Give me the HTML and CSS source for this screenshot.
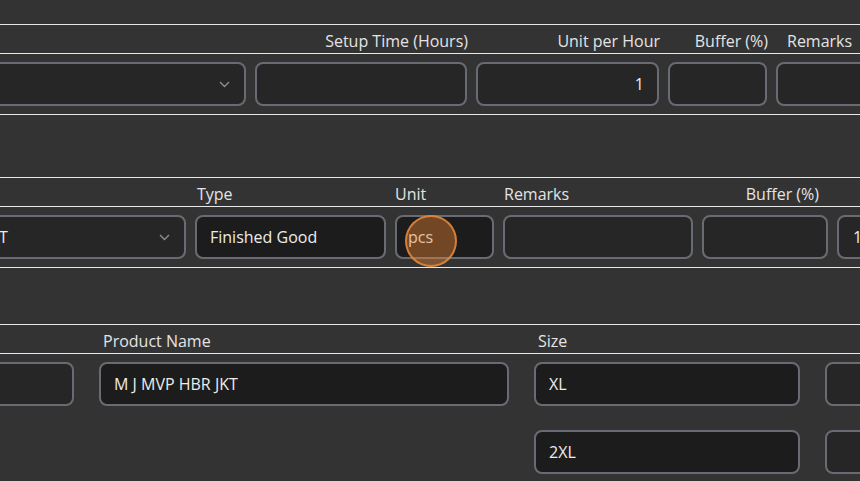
FILE: index.html
```html
<!DOCTYPE html>
<html lang="en">
<head>
<meta charset="utf-8">
<title>Routing form</title>
<link rel="stylesheet" href="styles.css">
</head>
<body>
<section class="block s1">
  <div class="head">
    <div class="grid">
      <div class="lbl"></div>
      <div class="lbl right">Setup Time (Hours)</div>
      <div class="lbl right">Unit per Hour</div>
      <div class="lbl right">Buffer (%)</div>
      <div class="lbl remarks1">Remarks</div>
    </div>
  </div>
  <div class="body">
    <div class="grid">
      <div class="field select"><span class="val"></span><svg class="chev" width="11" height="7" viewBox="0 0 11 7"><polyline points="1,1 5.5,5.5 10,1" fill="none" stroke="#8e8e8e" stroke-width="1.4"/></svg></div>
      <div class="field"></div>
      <div class="field num">1</div>
      <div class="field"></div>
      <div class="field"></div>
    </div>
  </div>
</section>

<section class="block s2">
  <div class="head">
    <div class="grid">
      <div class="lbl"></div>
      <div class="lbl pad2">Type</div>
      <div class="lbl">Unit</div>
      <div class="lbl pad1">Remarks</div>
      <div class="lbl right pr9">Buffer (%)</div>
      <div class="lbl"></div>
    </div>
  </div>
  <div class="body">
    <div class="grid">
      <div class="field select"><span class="val">M J MVP HBR JKT</span><svg class="chev" width="11" height="7" viewBox="0 0 11 7"><polyline points="1,1 5.5,5.5 10,1" fill="none" stroke="#8e8e8e" stroke-width="1.4"/></svg></div>
      <div class="field ro">Finished Good</div>
      <div class="field ro unit">pcs<span class="click"></span></div>
      <div class="field"></div>
      <div class="field"></div>
      <div class="field last">1</div>
    </div>
  </div>
</section>

<section class="block s3">
  <div class="head">
    <div class="grid">
      <div class="lbl"></div>
      <div class="lbl pad4">Product Name</div>
      <div class="lbl pad4">Size</div>
      <div class="lbl"></div>
    </div>
  </div>
  <div class="body">
    <div class="grid">
      <div class="field"></div>
      <div class="field ro">M J MVP HBR JKT</div>
      <div class="field ro">XL</div>
      <div class="field"></div>
      <div class="empty"></div>
      <div class="empty"></div>
      <div class="field ro">2XL</div>
      <div class="field"></div>
    </div>
  </div>
</section>
</body>
</html>
```

FILE: styles.css
```css
html, body {
  margin: 0;
  padding: 0;
  overflow: hidden;
  background: #333333;
}
body {
  font-family: "Open Sans", "Noto Sans", sans-serif;
  font-size: 16px;
  color: #e6e6e6;
  width: 860px;
  height: 481px;
}
.block {
  border-bottom: 1px solid #e8e8e8;
}
.s1 { margin-top: 24px; }
.s2 { margin-top: 62px; }
.s3 { margin-top: 56px; }

.head {
  border-top: 1px solid #e8e8e8;
  border-bottom: 1px solid #e8e8e8;
  height: 28px;
  overflow: hidden;
}
.body {
  padding: 8px 0;
}
.grid {
  display: grid;
  grid-template-columns: var(--cols);
  column-gap: var(--gap);
  row-gap: 24px;
  margin-left: var(--shift);
  width: max-content;
}
.s1 { --cols: 347px 212px 183px 99px 200px; --gap: 9px; --shift: -101px; }
.s2 { --cols: 317px 191px 99px 190px 126px 200px; --gap: 9px; --shift: -131px; }
.s3 { --cols: 274px 410px 266px 200px; --gap: 25px; --shift: -200px; }

.lbl {
  height: 28px;
  line-height: 28px;
  padding-top: 2px;
  box-sizing: border-box;
  white-space: nowrap;
  color: #e4e4e4;
}
.lbl.right { text-align: right; }
.s1 .lbl.right { margin-right: -1px; }
.lbl.pr9 { padding-right: 9px; }
.lbl.pad1 { padding-left: 1px; }
.lbl.pad2 { padding-left: 2px; }
.lbl.pad4 { padding-left: 4px; }
.lbl.remarks1 { padding-left: 11px; }

.field {
  position: relative;
  box-sizing: border-box;
  height: 44px;
  border: 2px solid #686c72;
  border-radius: 8px;
  background: #262626;
  padding: 0 13px;
  display: flex;
  align-items: center;
  white-space: nowrap;
  color: #ececec;
}
.field.ro { background: #1c1c1c; }
.field.num { justify-content: flex-end; }
.field.last { padding-left: 14px; }
.field.select { justify-content: space-between; padding-right: 14px; }
.chev { display: block; }
.empty { height: 44px; }

.unit { padding-left: 11px; }
.click {
  position: absolute;
  left: 8px;
  top: -2px;
  width: 52px;
  height: 52px;
  box-sizing: border-box;
  border-radius: 50%;
  background: rgba(230, 130, 50, 0.42);
  border: 2px solid rgba(225, 135, 60, 0.9);
}
```
